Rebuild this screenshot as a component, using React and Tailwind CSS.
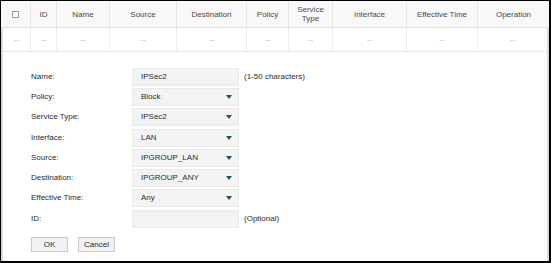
import React from "react";

const COLS = [
  { name: "", w: "w-[30px]" },
  { name: "ID", w: "w-[26px]" },
  { name: "Name", w: "w-[53px]" },
  { name: "Source", w: "w-[67px]" },
  { name: "Destination", w: "w-[70px]" },
  { name: "Policy", w: "w-[42px]" },
  { name: "Service Type", w: "w-[44px]" },
  { name: "Interface", w: "w-[74px]" },
  { name: "Effective Time", w: "w-[71px]" },
  { name: "Operation", w: "flex-1" },
];

const FIELDS = [
  { label: "Name:", value: "IPSec2", hint: "(1-50 characters)" },
  { label: "Policy:", value: "Block", select: true },
  { label: "Service Type:", value: "IPSec2", select: true },
  { label: "Interface:", value: "LAN", select: true, extra: true },
  { label: "Source:", value: "IPGROUP_LAN", select: true },
  { label: "Destination:", value: "IPGROUP_ANY", select: true },
  { label: "Effective Time:", value: "Any", select: true },
  { label: "ID:", value: "", hint: "(Optional)", extra: true },
];

function Arrow() {
  return (
    <svg width="6" height="4" viewBox="0 0 6 4" className="ml-auto mr-[6px]">
      <path d="M0 0H6L3 4Z" fill="#1d5566" />
    </svg>
  );
}

export default function App() {
  return (
    <div
      className="w-[551px] h-[263px] box-border border-t border-l border-r-2 border-b-2 border-black bg-white flex flex-col text-[8px] text-[#2b2b2b]"
      style={{ fontFamily: '"Liberation Sans", Arial, sans-serif' }}
    >
      {/* table header */}
      <div className="flex h-[27px] bg-[#f8f8f8] border-b border-[#dde3ea] text-[#4a4a4a]">
        {COLS.map((c, i) => (
          <div
            key={i}
            className={`${c.w} shrink-0 flex items-center justify-center text-center leading-[9px] ${
              i < COLS.length - 1 ? "border-r border-[#e6e6e6]" : ""
            }`}
          >
            {i === 0 ? (
              <span className="w-[7px] h-[7px] border border-[#999] bg-white" />
            ) : c.name === "Service Type" ? (
              <span>Service<br />Type</span>
            ) : (
              c.name
            )}
          </div>
        ))}
      </div>

      {/* body */}
      <div className="flex-1 flex flex-col border-l-2 border-r-2 border-[#d3dbe5]">
        <div className="flex h-[24px] border-b border-[#e3e7ec] text-[#bbb]">
          {COLS.map((c, i) => (
            <div
              key={i}
              className={`${i === 0 ? "w-[28px]" : c.w} shrink-0 flex items-center justify-center ${
                i < COLS.length - 1 ? "border-r border-[#eeeeee]" : ""
              }`}
            >
              --
            </div>
          ))}
        </div>

        <div className="flex flex-col gap-[2px] pl-[28px] pt-[16px]">
          {FIELDS.map((f) => (
            <div key={f.label} className={`flex items-center h-[18px] ${f.extra ? "mt-[1px]" : ""}`}>
              <div className="w-[101px] shrink-0">{f.label}</div>
              <div className="w-[107px] h-[18px] box-border bg-[#f3f3f3] border border-[#e9e9e9] flex items-center pl-[8px]">
                <span>{f.value}</span>
                {f.select && <Arrow />}
              </div>
              {f.hint && <div className="ml-[5px]">{f.hint}</div>}
            </div>
          ))}

          <div className="flex gap-[10px] mt-[7px]">
            <button className="w-[37px] h-[15px] box-border bg-[#f1f1f1] border border-[#c9c9c9] text-[8px] text-[#2b2b2b] leading-none">
              OK
            </button>
            <button className="w-[37px] h-[15px] box-border bg-[#f1f1f1] border border-[#c9c9c9] text-[8px] text-[#2b2b2b] leading-none">
              Cancel
            </button>
          </div>
        </div>
      </div>
    </div>
  );
}
